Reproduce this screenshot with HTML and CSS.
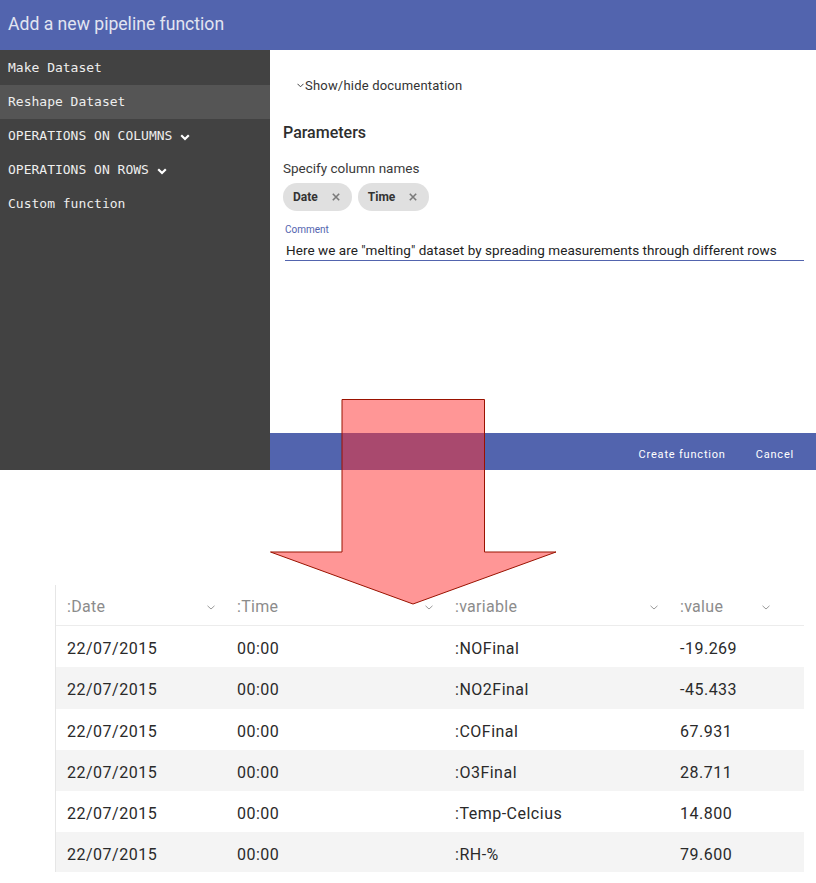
FILE: index.html
```html
<!DOCTYPE html>
<html>
<head>
<meta charset="utf-8">
<title>Add a new pipeline function</title>
<link rel="stylesheet" href="styles.css">
</head>
<body>
<div class="page">
  <div class="dialog">
    <header class="dlg-head">Add a new pipeline function</header>
    <div class="dlg-body">
      <nav class="side">
        <div class="side-item">Make Dataset</div>
        <div class="side-item active">Reshape Dataset</div>
        <div class="side-item">OPERATIONS ON COLUMNS<svg class="side-chev" viewBox="0 0 10 7"><polyline points="1.2,1.2 5,5 8.8,1.2"/></svg></div>
        <div class="side-item">OPERATIONS ON ROWS<svg class="side-chev" viewBox="0 0 10 7"><polyline points="1.2,1.2 5,5 8.8,1.2"/></svg></div>
        <div class="side-item">Custom function</div>
      </nav>
      <section class="main">
        <div class="main-content">
          <div class="doc-toggle"><svg class="doc-chev" viewBox="0 0 7 5"><polyline points="0.5,0.8 3.5,3.8 6.5,0.8"/></svg>Show/hide documentation</div>
          <h2 class="params">Parameters</h2>
          <div class="field-label">Specify column names</div>
          <div class="chips">
            <span class="chip">Date<svg class="chip-x" viewBox="0 0 8 8"><path d="M0.8 0.8L7.2 7.2M7.2 0.8L0.8 7.2"/></svg></span>
            <span class="chip">Time<svg class="chip-x" viewBox="0 0 8 8"><path d="M0.8 0.8L7.2 7.2M7.2 0.8L0.8 7.2"/></svg></span>
          </div>
          <div class="comment">
            <div class="comment-label">Comment</div>
            <div class="comment-input">Here we are "melting" dataset by spreading measurements through different rows</div>
          </div>
        </div>
        <footer class="actions">
          <span class="btn">Create function</span>
          <span class="btn">Cancel</span>
        </footer>
      </section>
    </div>
  </div>

  <div class="table-wrap">
    <div class="row head">
      <div class="cell hcell first">:Date<svg class="th-chev" viewBox="0 0 8 5"><polyline points="0.5,0.8 4,4 7.5,0.8"/></svg></div>
      <div class="cell hcell">:Time<svg class="th-chev" viewBox="0 0 8 5"><polyline points="0.5,0.8 4,4 7.5,0.8"/></svg></div>
      <div class="cell hcell">:variable<svg class="th-chev" viewBox="0 0 8 5"><polyline points="0.5,0.8 4,4 7.5,0.8"/></svg></div>
      <div class="cell hcell">:value<svg class="th-chev" viewBox="0 0 8 5"><polyline points="0.5,0.8 4,4 7.5,0.8"/></svg></div>
      <div class="cell"></div>
    </div>
    <div class="row">
      <div class="cell first">22/07/2015</div><div class="cell">00:00</div><div class="cell">:NOFinal</div><div class="cell">-19.269</div><div class="cell"></div>
    </div>
    <div class="row alt">
      <div class="cell first">22/07/2015</div><div class="cell">00:00</div><div class="cell">:NO2Final</div><div class="cell">-45.433</div><div class="cell"></div>
    </div>
    <div class="row">
      <div class="cell first">22/07/2015</div><div class="cell">00:00</div><div class="cell">:COFinal</div><div class="cell">67.931</div><div class="cell"></div>
    </div>
    <div class="row alt">
      <div class="cell first">22/07/2015</div><div class="cell">00:00</div><div class="cell">:O3Final</div><div class="cell">28.711</div><div class="cell"></div>
    </div>
    <div class="row">
      <div class="cell first">22/07/2015</div><div class="cell">00:00</div><div class="cell">:Temp-Celcius</div><div class="cell">14.800</div><div class="cell"></div>
    </div>
    <div class="row alt">
      <div class="cell first">22/07/2015</div><div class="cell">00:00</div><div class="cell">:RH-%</div><div class="cell">79.600</div><div class="cell"></div>
    </div>
  </div>

  <svg class="arrow" viewBox="0 0 816 883" width="816" height="883">
    <polygon points="342,399.5 484.5,399.5 484.5,552 556,552 413,604 270.5,552 342,552"/>
  </svg>
</div>
</body>
</html>
```

FILE: styles.css
```css
html, body {
  margin: 0;
  padding: 0;
  background: #ffffff;
}

body {
  font-family: Roboto, "Liberation Sans", Arial, sans-serif;
  color: #333333;
}

.page {
  position: relative;
  width: 816px;
  height: 883px;
  overflow: hidden;
}

/* ---------- dialog ---------- */
.dialog {
  height: 470px;
  display: flex;
  flex-direction: column;
}

.dlg-head {
  height: 50px;
  box-sizing: border-box;
  background: #5264ae;
  color: #e2e5f1;
  font-size: 17.6px;
  padding: 0 0 2px 8px;
  display: flex;
  align-items: center;
}

.dlg-body {
  flex: 1;
  display: flex;
  min-height: 0;
}

.side {
  width: 270px;
  flex: none;
  background: #424242;
  padding-top: 1px;
}

.side-item {
  height: 34px;
  display: flex;
  align-items: center;
  padding: 0 0 2px 8px;
  box-sizing: border-box;
  color: #eeeeee;
  font-family: "DejaVu Sans Mono", "Liberation Mono", monospace;
  font-size: 13px;
}

.side-item.active {
  background: #555555;
}

.side-chev {
  width: 10px;
  height: 7px;
  margin: 4px 0 0 8px;
  fill: none;
  stroke: #ffffff;
  stroke-width: 2.2;
}

.main {
  flex: 1;
  display: flex;
  flex-direction: column;
}

.main-content {
  flex: 1;
  padding: 25px 12px 0 13px;
}

.doc-toggle {
  height: 20px;
  display: flex;
  align-items: center;
  padding-left: 14px;
  font-size: 13px;
  letter-spacing: 0.2px;
  color: #333333;
}

.doc-chev {
  width: 7px;
  height: 5px;
  margin-right: 1px;
  fill: none;
  stroke: #444444;
  stroke-width: 1;
}

.params {
  margin: 28px 0 0 0;
  font-size: 16px;
  line-height: 20px;
  font-weight: 500;
  color: #2e2e2e;
}

.field-label {
  margin-top: 15px;
  font-size: 13.5px;
  line-height: 20px;
  color: #3a3a3a;
}

.chips {
  margin-top: 5px;
  display: flex;
  gap: 6px;
}

.chip {
  height: 28px;
  box-sizing: border-box;
  border-radius: 14px;
  background: #e0e0e0;
  display: inline-flex;
  align-items: center;
  gap: 14px;
  padding: 0 12px 0 10px;
  font-size: 12px;
  font-weight: bold;
  color: #333333;
}

.chip-x {
  width: 8px;
  height: 8px;
  fill: none;
  stroke: #7a7a7a;
  stroke-width: 1.6;
}

.comment {
  margin: 13px 0 0 2px;
}

.comment-label {
  font-size: 10px;
  line-height: 12px;
  color: #5264ae;
}

.comment-input {
  margin-top: 5px;
  padding: 0 0 1px 1px;
  font-size: 13.5px;
  letter-spacing: 0.05px;
  line-height: 18px;
  color: #222222;
  border-bottom: 1px solid #5264ae;
}

.actions {
  height: 37px;
  box-sizing: border-box;
  background: #5264ae;
  display: flex;
  justify-content: flex-end;
  align-items: center;
  gap: 30px;
  padding: 5px 22px 0 0;
  color: #ffffff;
  font-size: 11px;
  letter-spacing: 0.8px;
}

/* ---------- table ---------- */
.table-wrap {
  margin: 115px 12px 0 55px;
  height: 287px;
  overflow: hidden;
  border-left: 1px solid #e6e6e6;
}

.row {
  display: grid;
  grid-template-columns: 169px 218px 225px 112px 1fr;
  height: 41.25px;
  box-sizing: border-box;
  padding-top: 4px;
  align-items: center;
  font-size: 16px;
  letter-spacing: 0.5px;
  color: #2a2a2a;
}

.row.alt {
  background: #f4f4f4;
}

.row.head {
  height: 41px;
  padding-top: 2px;
  border-bottom: 1px solid #ececec;
  color: #8c8c8c;
  letter-spacing: 0.3px;
}

.cell {
  padding-left: 12px;
  white-space: nowrap;
}

.cell.first {
  padding-left: 11px;
}

.hcell {
  display: flex;
  align-items: center;
  justify-content: space-between;
  padding-right: 10px;
}

.th-chev {
  width: 8px;
  height: 5px;
  margin-top: 2px;
  fill: none;
  stroke: #9a9a9a;
  stroke-width: 1;
}

/* ---------- overlay arrow ---------- */
.arrow {
  position: absolute;
  left: 0;
  top: 0;
  pointer-events: none;
}

.arrow polygon {
  fill: rgba(255, 45, 45, 0.5);
  stroke: #9a1200;
  stroke-width: 1;
}
```
